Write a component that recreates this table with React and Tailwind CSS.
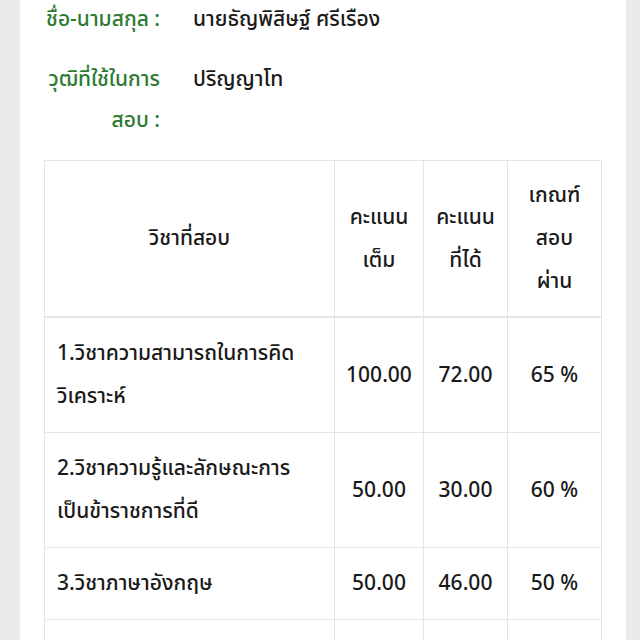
import React from "react";

const rows = [
  { subject: ["1.วิชาความสามารถในการคิด", "วิเคราะห์"], full: "100.00", got: "72.00", pass: "65 %" },
  { subject: ["2.วิชาความรู้และลักษณะการ", "เป็นข้าราชการที่ดี"], full: "50.00", got: "30.00", pass: "60 %" },
  { subject: ["3.วิชาภาษาอังกฤษ"], full: "50.00", got: "46.00", pass: "50 %" },
  { subject: ["ผลที่ได้รวมทั้งหมด", "(คะแนนรวม)"], full: "200.00", got: "148.00", pass: "ผ่าน" },
];

const InfoRow = ({ label, value }) => (
  <div className="flex">
    <div className="w-[116px] shrink-0 text-right text-[#2f7a33]">{label}</div>
    <div className="pl-[33px] text-[#1a1a1a]">{value}</div>
  </div>
);

export default function App() {
  return (
    <div className="min-h-[640px] bg-[#e9eaec] pl-[20px] pr-[14px] overflow-hidden font-['Noto_Sans_Thai','Noto_Sans','Liberation_Sans',sans-serif] text-[21px] font-medium">
      <div className="bg-white h-[640px] px-6 overflow-hidden">
        {/* Info */}
        <div className="flex flex-col gap-[19px] leading-[41px] -mt-[1px]">
          <InfoRow label="ชื่อ-นามสกุล :" value="นายธัญพิสิษฐ์ ศรีเรือง" />
          <InfoRow label="วุฒิที่ใช้ในการสอบ :" value="ปริญญาโท" />
        </div>

        {/* Scores */}
        <table className="mt-[19px] w-full table-fixed border-collapse text-[#1a1a1a] leading-[43px]">
          <colgroup>
            <col className="w-[290px]" />
            <col className="w-[89px]" />
            <col className="w-[84px]" />
            <col />
          </colgroup>
          <thead>
            <tr>
              <th className="border border-[#e3e5e8] border-b-2 px-3 py-[13px] font-medium text-center align-middle">วิชาที่สอบ</th>
              <th className="border border-[#e3e5e8] border-b-2 px-2 py-[13px] font-medium text-center align-middle">คะแนน<br />เต็ม</th>
              <th className="border border-[#e3e5e8] border-b-2 px-2 py-[13px] font-medium text-center align-middle">คะแนน<br />ที่ได้</th>
              <th className="border border-[#e3e5e8] border-b-2 px-2 py-[13px] font-medium text-center align-middle">เกณฑ์<br />สอบ<br />ผ่าน</th>
            </tr>
          </thead>
          <tbody>
            {rows.map((r, i) => (
              <tr key={i}>
                <td className="border border-[#e3e5e8] px-3 py-[14px] align-middle">
                  {r.subject.map((s, j) => (
                    <div key={j}>{s}</div>
                  ))}
                </td>
                <td className="border border-[#e3e5e8] px-1 py-[14px] text-center align-middle">{r.full}</td>
                <td className="border border-[#e3e5e8] px-1 py-[14px] text-center align-middle">{r.got}</td>
                <td className="border border-[#e3e5e8] px-1 py-[14px] text-center align-middle whitespace-pre">{r.pass}</td>
              </tr>
            ))}
          </tbody>
        </table>
      </div>
    </div>
  );
}
